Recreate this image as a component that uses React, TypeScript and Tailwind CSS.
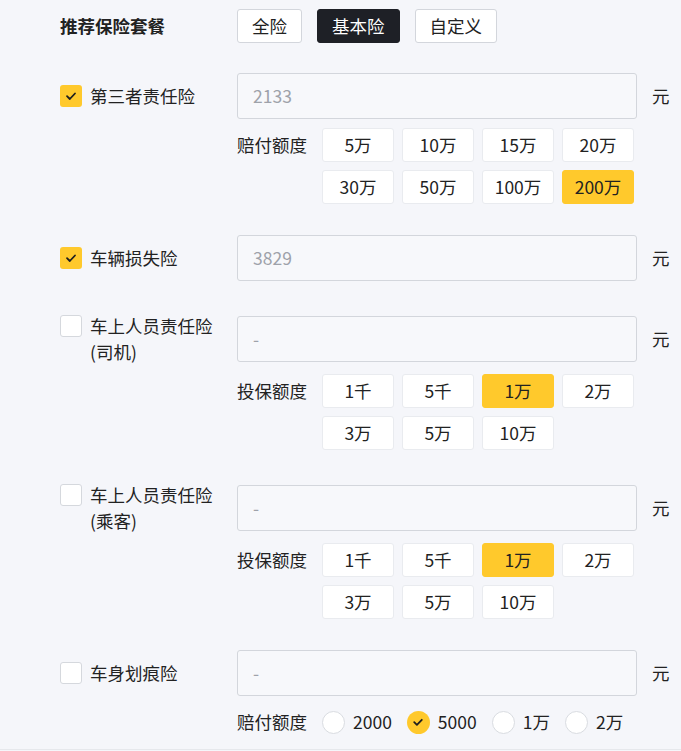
import React from "react";

const FONT = { fontFamily: '"Noto Sans CJK SC", "Noto Sans", sans-serif' };

function Check({ checked }: { checked: boolean }) {
  return checked ? (
    <span className="flex h-[22px] w-[22px] shrink-0 items-center justify-center rounded-[3px] bg-[#ffc92c]">
      <svg width="12" height="12" viewBox="0 0 12 12" fill="none">
        <path d="M2 6.2 L4.8 9 L10 3.5" stroke="#1f1f1f" strokeWidth="1.8" strokeLinecap="round" strokeLinejoin="round" />
      </svg>
    </span>
  ) : (
    <span className="block h-[22px] w-[22px] shrink-0 rounded-[3px] border border-[#d5d8dd] bg-white" />
  );
}

function Radio({ checked, label }: { checked: boolean; label: string }) {
  return (
    <div className="flex items-center gap-[8px]">
      {checked ? (
        <span className="flex h-[23px] w-[23px] items-center justify-center rounded-full bg-[#ffc92c]">
          <svg width="12" height="12" viewBox="0 0 12 12" fill="none">
            <path d="M2.2 6.2 L4.9 8.8 L9.8 3.8" stroke="#1f1f1f" strokeWidth="1.8" strokeLinecap="round" strokeLinejoin="round" />
          </svg>
        </span>
      ) : (
        <span className="block h-[23px] w-[23px] rounded-full border border-[#d9dce1] bg-white" />
      )}
      <span>{label}</span>
    </div>
  );
}

function OptionGrid({ title, options, selected }: { title: string; options: string[]; selected: string }) {
  return (
    <div className="mt-[9px] flex pl-[177px]">
      <div className="w-[85px] shrink-0 leading-[34px]">{title}</div>
      <div className="grid grid-cols-[repeat(4,72px)] gap-x-[8px] gap-y-[8px]">
        {options.map((o) => (
          <div
            key={o}
            className={
              "flex h-[34px] items-center justify-center rounded-[3px] border " +
              (o === selected ? "border-[#ffc92c] bg-[#ffc92c]" : "border-[#e9ebef] bg-white")
            }
          >
            {o}
          </div>
        ))}
      </div>
    </div>
  );
}

function ItemRow({ checked, label, value }: { checked: boolean; label: React.ReactNode; value: string }) {
  return (
    <div className="flex items-center">
      <div className="flex w-[177px] shrink-0 items-start gap-[8px]">
        <span className="mt-[2px]">
          <Check checked={checked} />
        </span>
        <div className="leading-[26px]">{label}</div>
      </div>
      <div className="flex h-[46px] w-[400px] items-center rounded-[3px] border border-[#d3d6dc] bg-[#f7f8fb] px-[15px] text-[#9ea2aa]">
        {value}
      </div>
      <span className="ml-[15px]">元</span>
    </div>
  );
}

export default function App() {
  return (
    <div className="h-[751px] w-[681px] overflow-hidden bg-[#f5f6fa] text-[17.5px] text-[#222222]" style={FONT}>
      <div className="pl-[60px] pt-[9px]">
        <div className="flex items-center">
          <div className="w-[177px] font-bold">推荐保险套餐</div>
          <div className="flex gap-[15px]">
            <div className="flex h-[34px] items-center rounded-[3px] border border-[#d3d6dc] bg-white px-[14px]">全险</div>
            <div className="flex h-[34px] items-center rounded-[3px] border border-[#1e2026] bg-[#1e2026] px-[14px] text-white">基本险</div>
            <div className="flex h-[34px] items-center rounded-[3px] border border-[#d3d6dc] bg-white px-[14px]">自定义</div>
          </div>
        </div>

        <div className="mt-[30px]">
          <ItemRow checked label="第三者责任险" value="2133" />
          <OptionGrid
            title="赔付额度"
            options={["5万", "10万", "15万", "20万", "30万", "50万", "100万", "200万"]}
            selected="200万"
          />
        </div>

        <div className="mt-[31px]">
          <ItemRow checked label="车辆损失险" value="3829" />
        </div>

        <div className="mt-[32px]">
          <ItemRow
            checked={false}
            label={
              <>
                <span className="block">车上人员责任险</span>
                <span className="block">(司机)</span>
              </>
            }
            value="-"
          />
          <OptionGrid title="投保额度" options={["1千", "5千", "1万", "2万", "3万", "5万", "10万"]} selected="1万" />
        </div>

        <div className="mt-[32px]">
          <ItemRow
            checked={false}
            label={
              <>
                <span className="block">车上人员责任险</span>
                <span className="block">(乘客)</span>
              </>
            }
            value="-"
          />
          <OptionGrid title="投保额度" options={["1千", "5千", "1万", "2万", "3万", "5万", "10万"]} selected="1万" />
        </div>

        <div className="mt-[31px]">
          <ItemRow checked={false} label="车身划痕险" value="-" />
          <div className="mt-[9px] flex h-[34px] items-center pl-[177px]">
            <div className="w-[85px] shrink-0">赔付额度</div>
            <div className="flex items-center gap-[15px]">
              <Radio checked={false} label="2000" />
              <Radio checked label="5000" />
              <Radio checked={false} label="1万" />
              <Radio checked={false} label="2万" />
            </div>
          </div>
        </div>
      </div>
      <div className="mt-[10px] h-[1px] bg-[#e6e8ec]" />
    </div>
  );
}
